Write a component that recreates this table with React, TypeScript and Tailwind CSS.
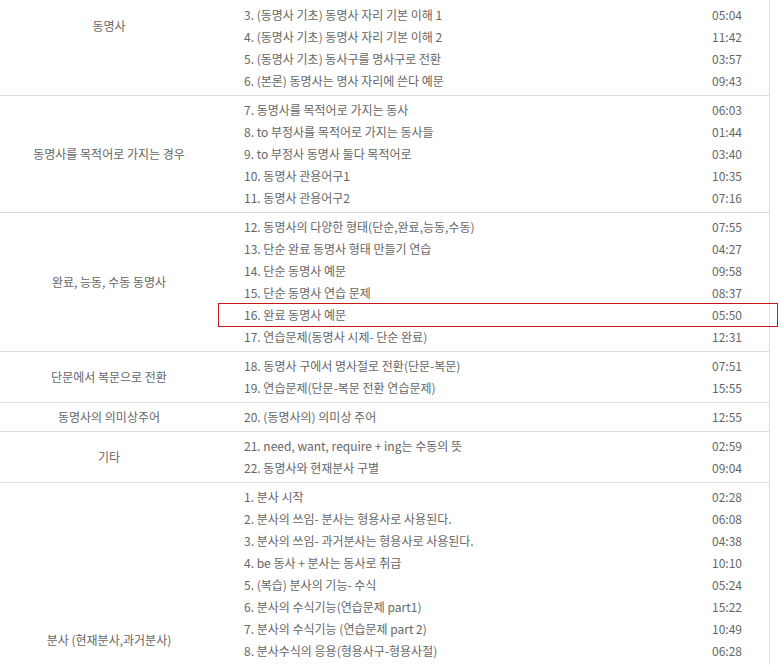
const groups: { title: string; items: [string, string][] }[] = [
  {
    title: "동명사",
    items: [
      ["1. (동명사 기초) 동명사의 개념", "04:12"],
      ["2. (동명사 기초) 동명사 만들기", "06:31"],
      ["3. (동명사 기초) 동명사 자리 기본 이해 1", "05:04"],
      ["4. (동명사 기초) 동명사 자리 기본 이해 2", "11:42"],
      ["5. (동명사 기초) 동사구를 명사구로 전환", "03:57"],
      ["6. (본론) 동명사는 명사 자리에 쓴다 예문", "09:43"],
    ],
  },
  {
    title: "동명사를 목적어로 가지는 경우",
    items: [
      ["7. 동명사를 목적어로 가지는 동사", "06:03"],
      ["8. to 부정사를 목적어로 가지는 동사들", "01:44"],
      ["9. to 부정사 동명사 둘다 목적어로", "03:40"],
      ["10. 동명사 관용어구1", "10:35"],
      ["11. 동명사 관용어구2", "07:16"],
    ],
  },
  {
    title: "완료, 능동, 수동 동명사",
    items: [
      ["12. 동명사의 다양한 형태(단순,완료,능동,수동)", "07:55"],
      ["13. 단순 완료 동명사 형태 만들기 연습", "04:27"],
      ["14. 단순 동명사 예문", "09:58"],
      ["15. 단순 동명사 연습 문제", "08:37"],
      ["16. 완료 동명사 예문", "05:50"],
      ["17. 연습문제(동명사 시제- 단순 완료)", "12:31"],
    ],
  },
  {
    title: "단문에서 복문으로 전환",
    items: [
      ["18. 동명사 구에서 명사절로 전환(단문-복문)", "07:51"],
      ["19. 연습문제(단문-복문 전환 연습문제)", "15:55"],
    ],
  },
  {
    title: "동명사의 의미상주어",
    items: [["20. (동명사의) 의미상 주어", "12:55"]],
  },
  {
    title: "기타",
    items: [
      ["21. need, want, require + ing는 수동의 뜻", "02:59"],
      ["22. 동명사와 현재분사 구별", "09:04"],
    ],
  },
  {
    title: "분사 (현재분사,과거분사)",
    items: [
      ["1. 분사 시작", "02:28"],
      ["2. 분사의 쓰임- 분사는 형용사로 사용된다.", "06:08"],
      ["3. 분사의 쓰임- 과거분사는 형용사로 사용된다.", "04:38"],
      ["4. be 동사 + 분사는 동사로 취급", "10:10"],
      ["5. (복습) 분사의 기능- 수식", "05:24"],
      ["6. 분사의 수식기능(연습문제 part1)", "15:22"],
      ["7. 분사의 수식기능 (연습문제 part 2)", "10:49"],
      ["8. 분사수식의 응용(형용사구-형용사절)", "06:28"],
      ["9. 분사의 서술기능", "08:14"],
      ["10. 분사의 서술기능 연습문제", "11:07"],
      ["11. 감정분사", "06:45"],
      ["12. 감정분사 연습문제", "09:21"],
      ["13. 분사 종합 연습문제 1", "13:02"],
      ["14. 분사 종합 연습문제 2", "12:16"],
    ],
  },
]

const highlighted = "16. 완료 동명사 예문"

export default function App() {
  return (
    <div
      className="h-[665px] overflow-hidden bg-white text-[12px] text-[#666]"
      style={{ fontFamily: '"Noto Sans CJK KR", "Noto Sans", sans-serif' }}
    >
      {/* list is scrolled: first two rows sit above the visible area */}
      <div className="w-[770px] -mt-[43px] border-r border-[#ddd]">
        {groups.map((group, gi) => (
          <div key={gi} className="flex border-b border-[#ddd]">
            <div className="w-[218px] flex items-center justify-center text-center">
              {group.title}
            </div>
            <div className="flex-1 py-[3px]">
              {group.items.map(([label, time]) => (
                <div key={label} className="relative h-[22px] flex items-center justify-between pl-[26px] pr-[27px]">
                  <span>{label}</span>
                  <span>{time}</span>
                  {label === highlighted && (
                    <div className="absolute left-0 right-[-9px] top-[-1px] bottom-[-1px] border border-[#c8161d] pointer-events-none" />
                  )}
                </div>
              ))}
            </div>
          </div>
        ))}
      </div>
    </div>
  )
}
